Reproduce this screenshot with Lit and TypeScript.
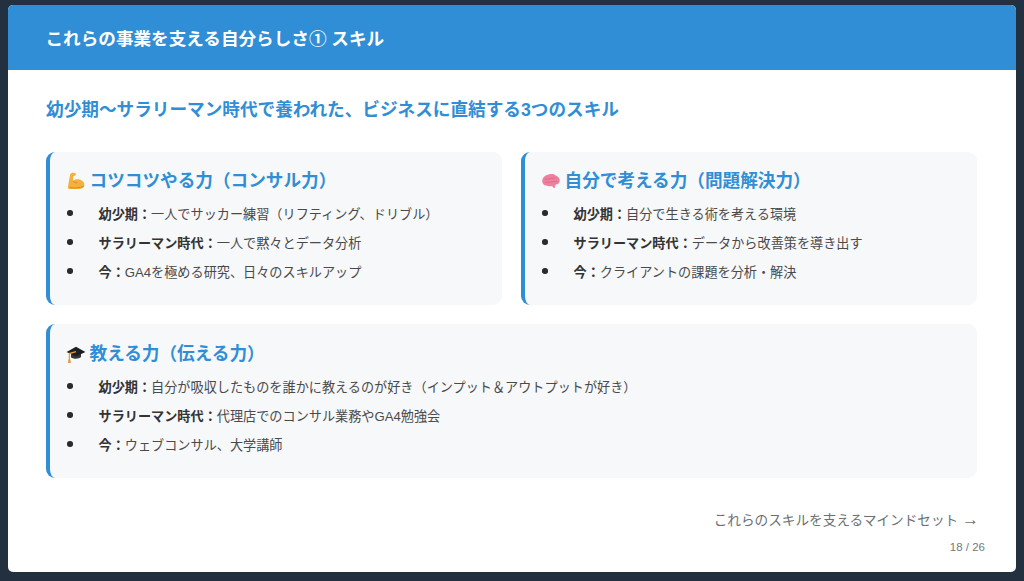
import { LitElement, html, css, svg } from "lit";
import { customElement } from "lit/decorators.js";

const muscle = svg`<svg class="emo" viewBox="0 0 20 20"><path d="M4.2 3.2 C5.5 1.4 8.6 1.3 9.6 2.6 C10.4 3.6 9.6 4.9 8.4 5 L7.4 5.2 L7 9.8 C8.6 8.3 11.4 7.6 13.8 8.6 C16.8 9.6 18.6 11.6 18.4 14.2 C18.2 16.8 15.8 18 12.8 18 L3.4 18 C2.2 18 1.7 17 1.9 15.8 Z" fill="#f5b13d"/><path d="M7 9.8 C7.6 11.6 9.6 12.2 11.4 11.6 M3.6 16.6 C7.4 17.2 13 17.2 17.6 15.4" fill="none" stroke="#d98a1f" stroke-width="1"/></svg>`;
const brain = svg`<svg class="emo" viewBox="0 0 20 20"><path d="M1.2 10.4 C1 7.2 3.4 4.6 6.2 4 C8.6 2.6 12.6 2.8 14.8 4.4 C17.4 5.2 19 7.6 18.8 10 C18.6 12.4 16.6 13.6 14.8 13.6 C14 14.4 13.6 15.6 14.2 16.8 C13 17.2 11.8 16.4 11.2 15 C9.4 15.6 7 15.4 5.2 14.6 C3 14.4 1.4 12.6 1.2 10.4 Z" fill="#ee7f9f"/><path d="M4 8.4 C6 7 7.6 8.8 9.4 7.6 C11 6.6 13 7.4 14.6 6.8 M4.4 11.6 C6.6 10.6 8.2 12 10.2 11 C12 10.2 14 11.4 16.2 10.2" fill="none" stroke="#d0688a" stroke-width=".8"/></svg>`;
const cap = svg`<svg class="emo" viewBox="0 0 20 20"><path d="M5 9.6 L5 13.2 C7 15.2 13 15.2 15 13 L15 9.6 Z" fill="#33363b"/><path d="M10 2.8 L19.4 8 L10 12.6 L.6 8 Z" fill="#1c1e22"/><path d="M10 7.6 L3.4 9.6 L3.4 16" fill="none" stroke="#e8983a" stroke-width="1.3"/><path d="M2.4 15.4 L4.4 15.4 L4.8 19 L2 19 Z" fill="#e8983a"/></svg>`;

const cards = [
  { icon: muscle, title: "コツコツやる力（コンサル力）", wide: false, items: [
    ["幼少期：", "一人でサッカー練習（リフティング、ドリブル）"],
    ["サラリーマン時代：", "一人で黙々とデータ分析"],
    ["今：", "GA4を極める研究、日々のスキルアップ"],
  ]},
  { icon: brain, title: "自分で考える力（問題解決力）", wide: false, items: [
    ["幼少期：", "自分で生きる術を考える環境"],
    ["サラリーマン時代：", "データから改善策を導き出す"],
    ["今：", "クライアントの課題を分析・解決"],
  ]},
  { icon: cap, title: "教える力（伝える力）", wide: true, items: [
    ["幼少期：", "自分が吸収したものを誰かに教えるのが好き（インプット＆アウトプットが好き）"],
    ["サラリーマン時代：", "代理店でのコンサル業務やGA4勉強会"],
    ["今：", "ウェブコンサル、大学講師"],
  ]},
];

@customElement("app-root")
export class AppRoot extends LitElement {
  static styles = css`
    :host { display: block; height: 581px; box-sizing: border-box; padding: 5px 8px 9px; background: #22303f;
      font-family: "Liberation Sans", "Noto Sans CJK JP", sans-serif; }
    .slide { position: relative; height: 567px; background: #fff; border-radius: 5px; overflow: hidden; display: flex; flex-direction: column; }
    header { height: 65px; flex: none; background: #308ed6; color: #fff; display: flex; align-items: center; padding: 0 37.5px; font-size: 17.6px; font-weight: 700; }
    .body { padding: 0 39px 0 38px; display: flex; flex-direction: column; flex: 1; }
    h2 { margin: 28px 0 0; height: 24px; line-height: 24px; font-size: 17.64px; font-weight: 700; color: #308ed6; }
    .grid { margin-top: 30px; display: grid; grid-template-columns: 456px 456px; grid-template-rows: 153px 154px; gap: 19px; }
    .card { box-sizing: border-box; background: #f7f8fa; border-left: 4px solid #308ed6; border-radius: 9px; padding: 17px 16px 0 16px; }
    .card.wide { grid-column: 1 / 3; padding-top: 18px; }
    h3 { margin: 0; height: 24px; line-height: 24px; font-size: 17.64px; font-weight: 700; color: #308ed6; display: flex; align-items: center; gap: 3.5px; }
    .emo { width: 20px; height: 20px; flex: none; }
    ul { list-style: none; margin: 10px 0 0; padding: 0; display: flex; flex-direction: column; gap: 9px; }
    li { display: flex; align-items: center; height: 20px; font-size: 13.15px; color: #4a4a4a; white-space: nowrap; }
    li::before { content: ""; width: 5.5px; height: 5.5px; border-radius: 50%; background: #2b2b2b; margin: 0 26px 0 1px; flex: none; }
    b { color: #333; font-weight: 700; }
    .next { margin: 32.5px -2px 0 0; text-align: right; font-size: 13.65px; line-height: 20px; color: #6b7074; }
    .arrow { font-size: 17px; line-height: 14px; }
    .page { position: absolute; right: 31px; bottom: 18px; font-size: 11.5px; line-height: 14px; color: #777; }
  `;
  render() {
    return html`<div class="slide">
      <header>これらの事業を支える自分らしさ① スキル</header>
      <div class="body">
        <h2>幼少期〜サラリーマン時代で養われた、ビジネスに直結する3つのスキル</h2>
        <div class="grid">
          ${cards.map(c => html`<section class="card ${c.wide ? "wide" : ""}">
            <h3>${c.icon}<span>${c.title}</span></h3>
            <ul>${c.items.map(i => html`<li><span><b>${i[0]}</b>${i[1]}</span></li>`)}</ul>
          </section>`)}
        </div>
        <div class="next">これらのスキルを支えるマインドセット <span class="arrow">→</span></div>
      </div>
      <div class="page">18 / 26</div>
    </div>`;
  }
}
